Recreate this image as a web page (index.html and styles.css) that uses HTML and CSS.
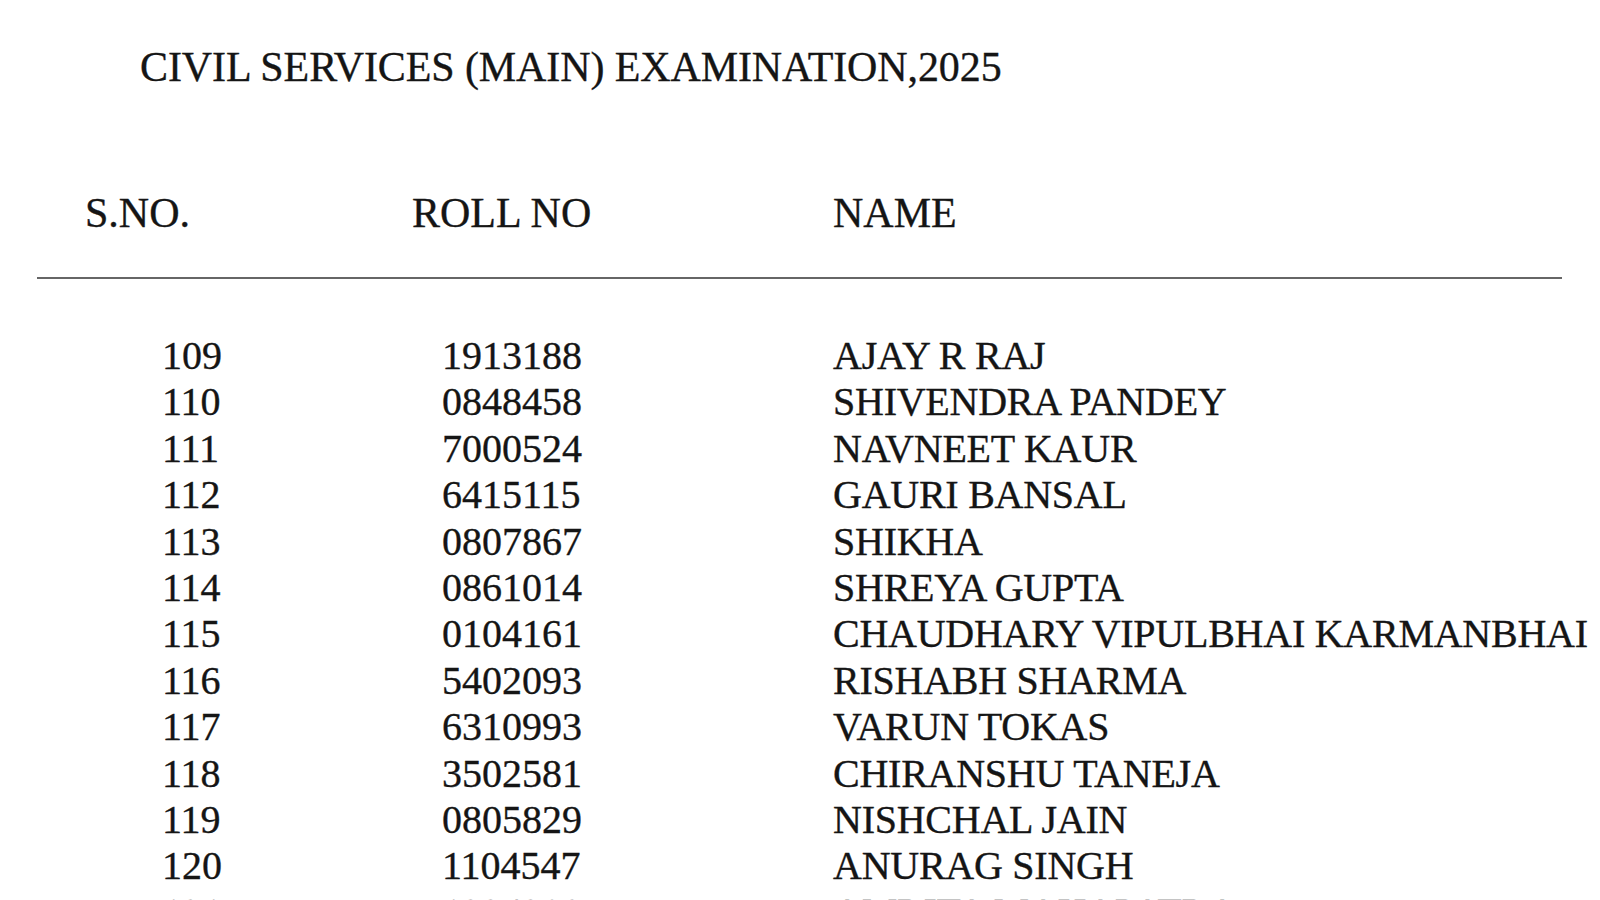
FILE: index.html
```html
<!DOCTYPE html>
<html lang="en">
<head>
<meta charset="utf-8">
<title>Civil Services (Main) Examination, 2025</title>
<link rel="stylesheet" href="styles.css">
</head>
<body>
<div class="page">
  <h1 class="title">CIVIL SERVICES (MAIN) EXAMINATION,2025</h1>
  <div class="head">
    <span class="h-sno">S.NO.</span>
    <span class="h-roll">ROLL NO</span>
    <span class="h-name">NAME</span>
  </div>
  <div class="rule"></div>
  <div class="rows">
    <div class="row"><span>109</span><span>1913188</span><span class="name">AJAY R RAJ</span></div>
    <div class="row"><span>110</span><span>0848458</span><span class="name">SHIVENDRA PANDEY</span></div>
    <div class="row"><span>111</span><span>7000524</span><span class="name">NAVNEET KAUR</span></div>
    <div class="row"><span>112</span><span>6415115</span><span class="name">GAURI BANSAL</span></div>
    <div class="row"><span>113</span><span>0807867</span><span class="name">SHIKHA</span></div>
    <div class="row"><span>114</span><span>0861014</span><span class="name">SHREYA GUPTA</span></div>
    <div class="row"><span>115</span><span>0104161</span><span class="name">CHAUDHARY VIPULBHAI KARMANBHAI</span></div>
    <div class="row"><span>116</span><span>5402093</span><span class="name">RISHABH SHARMA</span></div>
    <div class="row"><span>117</span><span>6310993</span><span class="name">VARUN TOKAS</span></div>
    <div class="row"><span>118</span><span>3502581</span><span class="name">CHIRANSHU TANEJA</span></div>
    <div class="row"><span>119</span><span>0805829</span><span class="name">NISHCHAL JAIN</span></div>
    <div class="row"><span>120</span><span>1104547</span><span class="name">ANURAG SINGH</span></div>
    <div class="row"><span>121</span><span>1334380</span><span class="name">AMRITA MAHAPATRA</span></div>
  </div>
</div>
</body>
</html>
```
FILE: styles.css
```css
html, body {
  margin: 0;
  padding: 0;
  background: #ffffff;
}
body {
  font-family: "Liberation Serif", "Times New Roman", serif;
  color: #151515;
  overflow: hidden;
  height: 900px;
  -webkit-text-stroke: 0.35px #151515;
}
.page {
  width: 1600px;
  height: 900px;
  overflow: hidden;
}
.title {
  margin: 0;
  padding: 42px 0 0 140px;
  font-size: 42px;
  font-weight: normal;
  line-height: 50px;
  letter-spacing: -0.1px;
}
.head {
  display: grid;
  grid-template-columns: 327px 421px 1fr;
  padding-left: 85px;
  margin-top: 96px;
  font-size: 42px;
  line-height: 50px;
}
.rule {
  margin: 39px 38px 0 37px;
  height: 2px;
  background: #666666;
}
.rows {
  margin-top: 54px;
}
.row {
  display: grid;
  grid-template-columns: 280px 391px 1fr;
  padding-left: 162px;
  font-size: 40px;
  line-height: 46.4px;
  white-space: nowrap;
}
.name {
  letter-spacing: -0.25px;
}
```
